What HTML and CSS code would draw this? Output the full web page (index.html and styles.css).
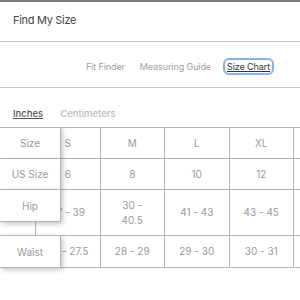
FILE: index.html
```html
<!DOCTYPE html>
<html>
<head>
<meta charset="utf-8">
<link rel="stylesheet" href="styles.css">
</head>
<body>
<div class="modal">
  <div class="header">Find My Size</div>
  <nav class="tabs">
    <span class="tab">Fit Finder</span>
    <span class="tab">Measuring Guide</span>
    <span class="tab active">Size Chart</span>
  </nav>
  <div class="units">
    <span class="unit active">Inches</span>
    <span class="unit">Centimeters</span>
  </div>
  <div class="chart">
    <div class="grid">
      <div class="cell r1"></div><div class="cell r1">S</div><div class="cell r1">M</div><div class="cell r1">L</div><div class="cell r1">XL</div><div class="cell r1"></div>
      <div class="cell r2"></div><div class="cell r2">6</div><div class="cell r2">8</div><div class="cell r2">10</div><div class="cell r2">12</div><div class="cell r2"></div>
      <div class="cell r3"></div><div class="cell r3">37 - 39</div><div class="cell r3">30 -<br>40.5</div><div class="cell r3">41 - 43</div><div class="cell r3">43 - 45</div><div class="cell r3"></div>
      <div class="cell r4"></div><div class="cell r4">26 - 27.5</div><div class="cell r4">28 - 29</div><div class="cell r4">29 - 30</div><div class="cell r4">30 - 31</div><div class="cell r4"></div>
    </div>
    <div class="sticky">
      <div class="label l1">Size</div>
      <div class="label l2">US Size</div>
      <div class="label l3">Hip</div>
      <div class="label l4">Waist</div>
    </div>
  </div>
</div>
</body>
</html>
```

FILE: styles.css
```css
html, body {
  margin: 0;
  padding: 0;
  background: #fff;
}
body {
  font-family: Inter, "Noto Sans", sans-serif;
  width: 300px;
  height: 300px;
  overflow: hidden;
}
.modal {
  border-top: 2px solid #7a7a7a;
}
.header {
  height: 40px;
  box-sizing: border-box;
  padding-left: 13px;
  display: flex;
  align-items: center;
  font-size: 11px;
  letter-spacing: -0.3px;
  color: #444;
  border-bottom: 1px solid #c8c8c8;
  padding-bottom: 4px;
}
.tabs {
  height: 46px;
  box-sizing: border-box;
  display: flex;
  justify-content: flex-end;
  align-items: center;
  gap: 15px;
  padding-right: 29px;
  border-bottom: 1px solid #c8c8c8;
  padding-top: 4px;
}
.tab {
  font-size: 9px;
  color: #a0a0a0;
  letter-spacing: -0.1px;
}
.tab.active {
  color: #333;
  text-decoration: underline;
  outline: 2px solid #8ab0ea;
  outline-offset: 1px;
  border-radius: 3px;
  padding: 0 1px;
}
.units {
  height: 39px;
  box-sizing: border-box;
  display: flex;
  align-items: flex-end;
  gap: 17px;
  padding-left: 13px;
  padding-bottom: 8px;
}
.unit {
  font-size: 9.5px;
  color: #bbb;
  font-weight: 500;
}
.unit.active {
  color: #555;
  text-decoration: underline;
}
.chart {
  position: relative;
  overflow: hidden;
  height: 172px;
}
.grid {
  display: grid;
  grid-template-columns: repeat(6, 64.5px);
  margin-left: -28.5px;
  border-top: 1px solid #b4b4b4;
  width: max-content;
}
.cell {
  border-right: 1px solid #b4b4b4;
  border-bottom: 1px solid #b4b4b4;
  display: flex;
  align-items: center;
  justify-content: center;
  text-align: center;
  font-size: 10px;
  line-height: 15px;
  color: #9a9a9a;
  white-space: nowrap;
}
.r1 { height: 30px; }
.r2 { height: 30px; }
.r3 { height: 45px; }
.r4 { height: 31px; }
.sticky {
  position: absolute;
  left: 0;
  top: 0;
  width: 61px;
  display: flex;
  flex-direction: column;
}
.label {
  box-sizing: border-box;
  background: #fff;
  border: 1px solid #b4b4b4;
  border-left: none;
  display: flex;
  align-items: center;
  justify-content: center;
  font-size: 10px;
  color: #9a9a9a;
  box-shadow: 2px 2px 5px rgba(0, 0, 0, 0.22);
}
.l1 { height: 32px; }
.l2 { height: 32px; margin-top: -1px; }
.l3 { height: 33px; margin-top: -1px; margin-bottom: 13px; }
.l4 { height: 33px; }
```
